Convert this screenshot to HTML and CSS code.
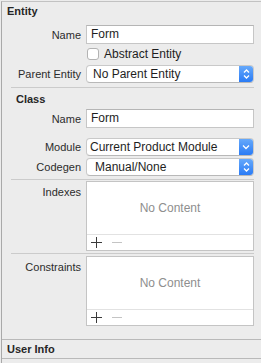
FILE: index.html
```html
<!DOCTYPE html>
<html lang="en">
<head>
    <meta charset="UTF-8">
    <title>Entity Inspector</title>
    <link rel="stylesheet" href="styles.css">
</head>
<body>

<div class="inspector">
    <div class="sectionTitle entityTitle">Entity</div>

    <div class="row nameRow">
        <div class="label">Name</div>
        <div class="textField">Form</div>
    </div>
    <div class="row checkRow">
        <div class="label"></div>
        <div class="check">
            <span class="checkBox"></span>
            <span>Abstract Entity</span>
        </div>
    </div>
    <div class="row popRow">
        <div class="label">Parent Entity</div>
        <div class="popup">
            <span class="popText">No Parent Entity</span>
            <span class="popArrow">
                <svg width="7" height="10" viewBox="0 0 7 10"><path d="M1 3.5 L3.5 1 L6 3.5 M1 6.5 L3.5 9 L6 6.5" fill="none" stroke="#fff" stroke-width="1.3"/></svg>
            </span>
        </div>
    </div>

    <div class="separator"></div>

    <div class="sectionTitle classTitle">Class</div>

    <div class="row classNameRow">
        <div class="label">Name</div>
        <div class="textField">Form</div>
    </div>
    <div class="row moduleRow">
        <div class="label">Module</div>
        <div class="popup combo">
            <span class="popText">Current Product Module</span>
            <span class="popArrow">
                <svg width="8" height="6" viewBox="0 0 8 6"><path d="M1 1.5 L4 4.5 L7 1.5" fill="none" stroke="#fff" stroke-width="1.3"/></svg>
            </span>
        </div>
    </div>
    <div class="row codegenRow">
        <div class="label">Codegen</div>
        <div class="popup">
            <span class="popText codegenText">Manual/None</span>
            <span class="popArrow">
                <svg width="7" height="10" viewBox="0 0 7 10"><path d="M1 3.5 L3.5 1 L6 3.5 M1 6.5 L3.5 9 L6 6.5" fill="none" stroke="#fff" stroke-width="1.3"/></svg>
            </span>
        </div>
    </div>

    <div class="separator codegenSep"></div>

    <div class="row tableRow indexesRow">
        <div class="label tableLabel">Indexes</div>
        <div class="tableBox">
            <div class="tableBody">No Content</div>
            <div class="tableFoot">
                <span class="plus"></span>
                <span class="minus"></span>
            </div>
        </div>
    </div>

    <div class="separator tableSep"></div>

    <div class="row tableRow constraintsRow">
        <div class="label tableLabel">Constraints</div>
        <div class="tableBox">
            <div class="tableBody">No Content</div>
            <div class="tableFoot">
                <span class="plus"></span>
                <span class="minus"></span>
            </div>
        </div>
    </div>

    <div class="fullSeparator"></div>
    <div class="sectionTitle userTitle">User Info</div>
    <div class="fullSeparator"></div>
</div>

</body>
</html>
```

FILE: styles.css
```css
html, body {
    margin: 0;
    background: #ececec;
    overflow: hidden;
}

body {
    padding: 1px 0 0 1px;
    font-family: "Liberation Sans", Arial, sans-serif;
    font-size: 11px;
    color: #262626;
}

.inspector {
    box-sizing: border-box;
    display: flex;
    flex-direction: column;
    border-left: 1px solid #a9a9a9;
    border-top: 1px solid #c2c2c2;
    height: calc(100vh - 1px);
}

/* titles of each block */
.sectionTitle {
    font-weight: bold;
    font-size: 11px;
    color: #262626;
}

.entityTitle {
    height: 18px;
    line-height: 18px;
    padding-left: 5px;
}

.classTitle {
    height: 19px;
    line-height: 19px;
    margin-top: 2px;
    padding-left: 14px;
}

.userTitle {
    height: 18px;
    line-height: 18px;
    padding-left: 5px;
}

.row {
    display: grid;
    grid-template-columns: 79px 168px;
    column-gap: 5px;
    align-items: center;
}

.label {
    text-align: right;
    color: #2b2b2b;
    white-space: nowrap;
}

.nameRow {
    margin-top: 5px;
}

.checkRow {
    margin-top: 3px;
    height: 14px;
}

.popRow {
    margin-top: 4px;
}

.classNameRow {
    margin-top: 0;
}

.moduleRow {
    margin-top: 10px;
}

.codegenRow {
    margin-top: 2px;
}

.textField {
    box-sizing: border-box;
    height: 19px;
    line-height: 17px;
    padding-left: 4px;
    background: #fff;
    border: 1px solid #c6c6c6;
    border-top-color: #b5b5b5;
    font-size: 12px;
    color: #1e1e1e;
}

.check {
    display: flex;
    align-items: center;
    gap: 5px;
    margin-left: 1px;
    font-size: 12px;
    color: #1e1e1e;
}

.checkBox {
    box-sizing: border-box;
    width: 12px;
    height: 12px;
    border: 1px solid #b3b3b3;
    border-radius: 3px;
    background: #fff;
}

.popup {
    box-sizing: border-box;
    display: flex;
    height: 18px;
    background: #fff;
    border: 1px solid #c9c9c9;
    border-bottom-color: #b8b8b8;
    border-radius: 4px;
    overflow: hidden;
    font-size: 12px;
    color: #1e1e1e;
}

.popText {
    flex: 1;
    line-height: 16px;
    padding-left: 6px;
    white-space: nowrap;
}

.combo .popText {
    padding-left: 3px;
}

.codegenText {
    padding-left: 8px;
}

.popArrow {
    width: 14px;
    display: flex;
    align-items: center;
    justify-content: center;
    background: linear-gradient(#66a9fb, #2a7bf5);
}

.separator {
    height: 1px;
    background: #cbcbcb;
    margin: 4px 7px 0 9px;
}

.codegenSep {
    margin-top: 3px;
}

.tableRow {
    align-items: start;
}

.indexesRow {
    margin-top: 1px;
}

.constraintsRow {
    margin-top: 2px;
}

.tableLabel {
    margin-top: 5px;
}

.tableBox {
    box-sizing: border-box;
    height: 70px;
    display: flex;
    flex-direction: column;
    background: #fff;
    border: 1px solid #c4c4c4;
}

.tableBody {
    flex: 1;
    display: flex;
    align-items: center;
    justify-content: center;
    color: #8e8e8e;
    font-size: 12px;
}

.tableFoot {
    height: 15px;
    border-top: 1px solid #e2e2e2;
    display: flex;
    align-items: center;
    gap: 10px;
    padding-left: 4px;
}

.plus {
    position: relative;
    width: 11px;
    height: 11px;
}

.plus::before,
.plus::after,
.minus::before {
    content: "";
    position: absolute;
    background: #3a3a3a;
}

.plus::before {
    left: 0;
    right: 0;
    top: 5px;
    height: 1px;
}

.plus::after {
    top: 0;
    bottom: 0;
    left: 5px;
    width: 1px;
}

.minus {
    position: relative;
    width: 10px;
    height: 11px;
}

.minus::before {
    left: 0;
    right: 0;
    top: 5px;
    height: 1px;
    background: #c4c4c4;
}

.tableSep {
    margin-top: 2px;
}

.fullSeparator {
    height: 1px;
    background: #b9b9b9;
}

.constraintsRow + .fullSeparator {
    margin-top: 13px;
}
```
